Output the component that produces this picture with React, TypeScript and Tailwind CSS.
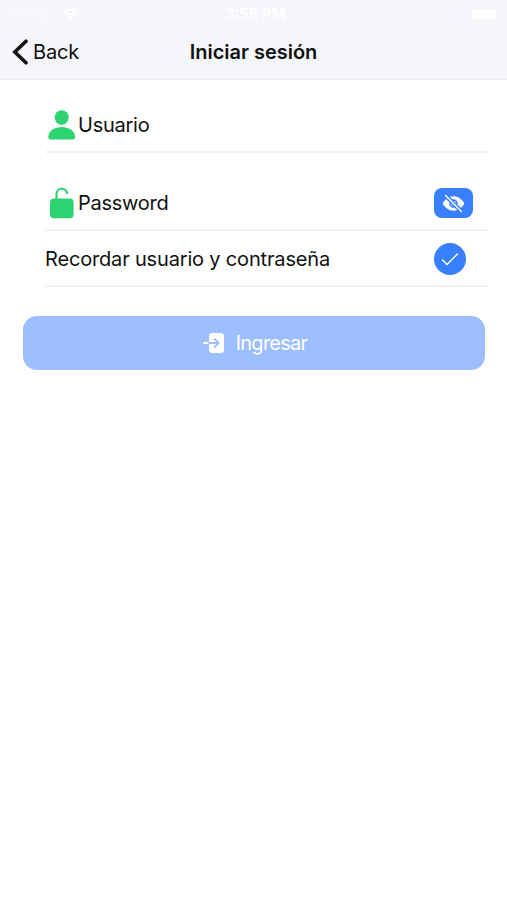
import type { ReactNode } from 'react'
import { IoEyeOff } from 'react-icons/io5'

function PersonIcon() {
  return (
    <svg width="28" height="30" viewBox="0 0 28 30" fill="currentColor">
      <ellipse cx="13.700" cy="7.600" rx="7" ry="7.400" />
      <path d="M13.700 17C6.500 17 1 20.500.3 26.500c-.2 2 .7 3 2.300 3h22.200c1.600 0 2.500-1 2.300-3C26.400 20.500 20.900 17 13.700 17Z" />
    </svg>
  )
}

function LockOpenIcon() {
  return (
    <svg width="28" height="32" viewBox="0 0 28 32" fill="none">
      <rect x="2" y="11.500" width="23.600" height="19.800" rx="4" fill="currentColor" />
      <path d="M8.500 12.500V7a5.300 5.500 0 0 1 10.500-.8" stroke="currentColor" strokeWidth="2.200" strokeLinecap="round" />
    </svg>
  )
}

function EnterIcon() {
  return (
    <svg width="21" height="20" viewBox="0 0 21 20" fill="none" strokeWidth="1.800" strokeLinecap="round" strokeLinejoin="round">
      <rect x="6" width="15" height="20" rx="3.200" fill="white" />
      <path d="M.9 10H6" stroke="white" />
      <path d="M6 10h9M11.500 5.800l4.200 4.200-4.200 4.200" stroke="#9dbfff" />
    </svg>
  )
}

function StatusBar() {
  return (
    <div className="flex h-7 items-center justify-between pl-2 pr-[11px] text-[13px] text-white">
      <div className="flex w-24 items-center gap-3">
        <span className="opacity-60">Carrier</span>
        <svg width="16" height="12" viewBox="0 0 16 12" fill="none" stroke="currentColor" strokeWidth="2.400">
          <path d="M1 4.500a10 10 0 0 1 14 0M3.500 7.500a6.400 6.400 0 0 1 9 0M6.500 10a2.500 2.500 0 0 1 3 0" />
        </svg>
      </div>
      <span className="pl-1.5 text-[15px] font-semibold">3:55 PM</span>
      <div className="flex w-24 justify-end">
        <span className="h-2.5 w-6 rounded-xs bg-white" />
      </div>
    </div>
  )
}

function Header() {
  return (
    <header className="h-20 border-b border-[#ebecee] bg-[#f5f6f9]">
      <StatusBar />
      <div className="grid h-12 grid-cols-[1fr_auto_1fr] items-center">
        <button className="flex items-center gap-[5px] pl-3 text-left text-[20px] tracking-[-0.2px]">
          <svg width="16" height="26" viewBox="0 0 16 26" fill="none" stroke="currentColor" strokeWidth="3.600" strokeLinecap="round">
            <path d="M14 2.200 2.800 13 14 23.800" />
          </svg>
          Back
        </button>
        <h1 className="text-[20px] font-semibold tracking-[-0.02px]">Iniciar sesión</h1>
      </div>
    </header>
  )
}

function Field({ icon, label, children }: { icon: ReactNode; label: string; children?: ReactNode }) {
  return (
    <div className="flex items-center border-b-2 border-[#f1f1f1] pr-[15px]">
      <span className="ml-[3px] text-[#2dd36f]">{icon}</span>
      <span className="ml-[2px] flex-1 text-[20px] tracking-[-0.25px]">{label}</span>
      {children}
    </div>
  )
}

export default function App() {
  return (
    <div className="min-h-[900px] bg-white font-['Inter',sans-serif] text-[#111]">
      <Header />

      <main>
        {/* Login form */}
        <div className="ml-[45px] mr-[19px]">
          <div className="grid h-[73px] pt-[19px]">
            <Field icon={<PersonIcon />} label="Usuario" />
          </div>
          <div className="grid h-[78px] pt-[24px]">
            <Field icon={<LockOpenIcon />} label="Password">
              <button
                aria-label="Mostrar password"
                className="flex h-[30px] w-[39px] items-center justify-center rounded-lg bg-[#3880ff] text-[23px] text-white"
              >
                <IoEyeOff />
              </button>
            </Field>
          </div>

          <div className="flex h-14 items-center justify-between border-b-2 border-[#f1f1f1] pr-[22px] pt-px">
            <span className="text-[20px] tracking-[-0.17px]">Recordar usuario y contraseña</span>
            <span className="flex size-8 items-center justify-center rounded-full bg-[#3880ff]">
              <svg width="20" height="16" viewBox="0 0 20 16" fill="none" stroke="white" strokeWidth="1.400">
                <path d="m2 8.500 5 5L18 2.500" />
              </svg>
            </span>
          </div>
        </div>

        {/* Submit */}
        <div className="pl-[23px] pr-[22px] pt-[29px]">
          <button className="flex h-[54px] w-full items-center justify-center gap-3 rounded-[14px] bg-[#9dbfff] pl-0.5 text-[20px] tracking-[-0.75px] text-white">
            <EnterIcon />
            Ingresar
          </button>
        </div>
      </main>
    </div>
  )
}
